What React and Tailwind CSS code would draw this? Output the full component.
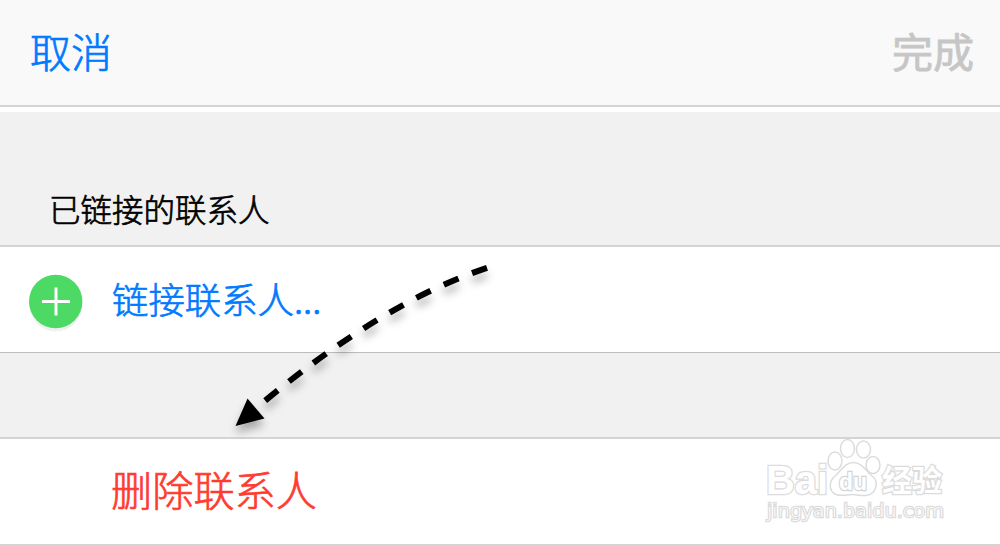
import React from 'react';

const NavBar = () => (
  <header className="h-[107px] shrink-0 flex items-center justify-between bg-[#f9f9f9] border-b-2 border-[#d4d4d4] pl-[30px] pr-[26px] pb-[4px] text-[41px] leading-none">
    <button className="text-[#007aff]">取消</button>
    <button className="font-normal text-[#c6c6c6] [-webkit-text-stroke:0.8px_#c6c6c6]">完成</button>
  </header>
);

const AddIcon = () => (
  <svg className="w-[54px] h-[60px] shrink-0 overflow-visible" viewBox="0 0 54 60">
    <circle cx="26.7" cy="30.5" r="26" fill="#f0f0f0" />
    <circle cx="26.7" cy="26.5" r="26.7" fill="#4cd964" />
    <path d="M13 26.5H41M27 12.5V40.5" stroke="#fff" strokeWidth="3" />
  </svg>
);

const Arrow = () => (
  <svg
    className="absolute left-0 top-0 w-[1000px] h-[546px] pointer-events-none drop-shadow-[0_7px_4px_rgba(0,0,0,0.3)]"
    viewBox="0 0 1000 546"
  >
    <path
      d="M487 267.8Q384 302 263 402.5"
      fill="none"
      stroke="#000"
      strokeWidth="6"
      strokeDasharray="16 14.5"
    />
    <path d="M235.5 426L247.5 398.5L264.5 418.5Z" fill="#000" />
  </svg>
);

const Watermark = () => (
  <svg
    className="absolute left-[755px] top-[430px] w-[200px] h-[100px] pointer-events-none"
    viewBox="0 0 200 100"
    fill="#fff"
    stroke="#dcdcdc"
    strokeWidth="1.5"
    fontFamily="'Liberation Sans', 'Noto Sans CJK SC', sans-serif"
  >
    <text x="11" y="64" fontSize="41" fontWeight="700" strokeWidth="2.6" textLength="62" lengthAdjust="spacingAndGlyphs" paintOrder="stroke">Bai</text>
    <ellipse cx="80" cy="31" rx="7" ry="9" />
    <ellipse cx="92.5" cy="18.5" rx="7" ry="9" />
    <ellipse cx="108.5" cy="19.5" rx="7" ry="8.5" />
    <ellipse cx="118" cy="35" rx="7" ry="8.5" />
    <path d="M98 32.5C107 32.5 110 40 117 46C124 51 122 64 111 65.5C104 66 102 64.5 98 64.5C92 64.5 87 66.5 81 64.5C73 61 74 51 80 46C86 41 90 32.5 98 32.5Z" />
    <text x="84" y="60" fontSize="24" fontWeight="700" textLength="28" lengthAdjust="spacingAndGlyphs" strokeWidth="2.4" stroke="#d4d4d4" paintOrder="stroke">du</text>
    <text x="127" y="61" fontSize="30" fontWeight="700" strokeWidth="2.6" textLength="60" paintOrder="stroke">经验</text>
    <text x="12" y="87" fontSize="18" fontFamily="'DejaVu Sans', sans-serif" strokeWidth="2.6" textLength="177" lengthAdjust="spacingAndGlyphs" paintOrder="stroke">jingyan.baidu.com</text>
  </svg>
);

export default function App() {
  return (
    <div
      lang="zh-CN"
      className="relative w-[1000px] h-[546px] overflow-hidden flex flex-col bg-white font-['Noto_Sans_CJK_SC',sans-serif] font-light [-webkit-text-stroke:0.7px]"
    >
      <NavBar />
      <main className="flex flex-col flex-1">
        <h2 className="mt-[5px] h-[135px] flex items-end bg-[#f1f1f1] border-b-2 border-[#d4d4d4] pl-[49px] pb-[21px] text-[31.5px] leading-none text-black">
          已链接的联系人
        </h2>
        <button className="h-[106px] flex items-center gap-[29px] border-b border-[#bdbdbd] pl-[29px] pt-[10px] text-[36.4px] leading-none text-[#007aff] text-left">
          <AddIcon />
          <span className="pb-[12px]">链接联系人...</span>
        </button>
        <div className="h-[86px] bg-[#f1f1f1] border-b-2 border-[#d4d4d4]" />
        <button className="h-[107px] flex items-center border-b-2 border-[#d4d4d4] pl-[111px] pb-[5px] text-[41.2px] leading-none text-[#ff3b30]">
          删除联系人
        </button>
      </main>
      <Arrow />
      <Watermark />
    </div>
  );
}
